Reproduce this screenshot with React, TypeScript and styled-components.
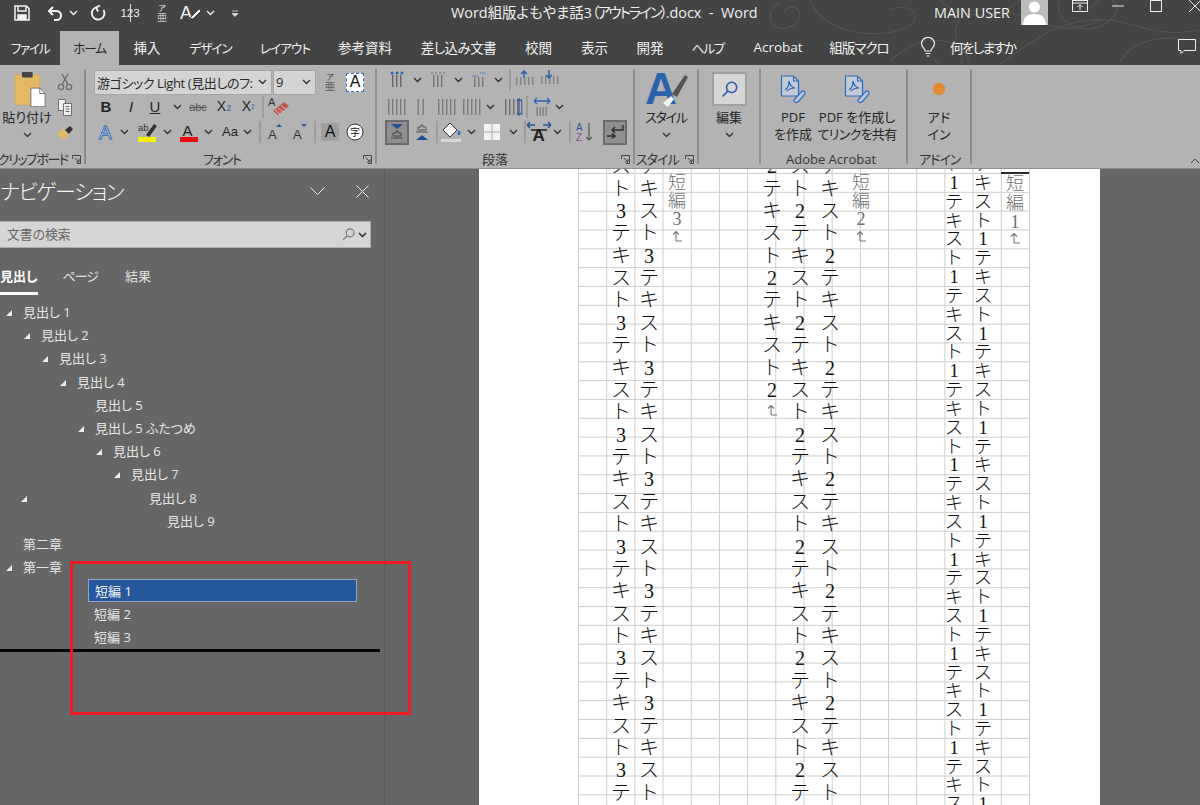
import React, { ReactNode } from "react";
import styled, { createGlobalStyle } from "styled-components";

const UI = `"Open Sans", "Noto Sans CJK JP", sans-serif`;

const Global = createGlobalStyle`
  html, body { margin: 0; padding: 0; background: #666; }
  body { font-family: ${UI}; overflow: hidden; }
  #root { width: 1200px; height: 805px; }
`;

const Win = styled.div`
  width: 1200px;
  height: 805px;
  display: flex;
  flex-direction: column;
  overflow: hidden;
  position: relative;
  font-feature-settings: "palt";
`;

/* the katakana of the reference's UI font is narrower than Noto's */
const Tight = styled.span<{ $ls: number }>`
  letter-spacing: ${(p) => p.$ls}px;
`;

/* title bar + tabs */
const Top = styled.div`
  background: #444;
  height: 65px;
  flex: none;
  position: relative;
`;
const Swirl = styled.svg`
  position: absolute;
  right: 0;
  top: 0;
`;
const TitleBar = styled.div`
  height: 31px;
  display: flex;
  align-items: center;
  position: relative;
  color: #efefef;
`;
const Qat = styled.div`
  width: 451px;
  flex: none;
  padding-bottom: 5px;
`;
const DocTitle = styled.div`
  font-size: 14.4px;
  line-height: 20px;
  width: 483px;
  flex: none;
  padding-bottom: 5px;
  white-space: pre;
`;
const UserName = styled.div`
  font-size: 14.4px;
  line-height: 20px;
  width: 87px;
  flex: none;
  padding-bottom: 5px;
  white-space: nowrap;
`;
const Avatar = styled.svg`
  flex: none;
  align-self: flex-start;
`;
const WinBtn = styled.div<{ $gap: number }>`
  flex: none;
  align-self: flex-start;
  margin-left: ${(p) => p.$gap}px;
  height: 14px;
  display: flex;
`;
const Tabs = styled.div`
  height: 34px;
  display: flex;
  align-items: stretch;
  position: relative;
  font-size: 13.5px;
  color: #f0f0f0;
`;
const Tab = styled.div<{ $on?: boolean; $w: number; $ls: number; $kana: boolean }>`
  width: ${(p) => p.$w}px;
  flex: none;
  display: flex;
  align-items: center;
  justify-content: center;
  padding-bottom: 2px;
  white-space: nowrap;
  letter-spacing: ${(p) => p.$ls}px;
  font-size: ${(p) => (p.$kana ? 12.6 : 13.5)}px;
  background: ${(p) => (p.$on ? "#b3b3b3" : "transparent")};
  color: ${(p) => (p.$on ? "#262626" : "#f0f0f0")};
`;
const TellMe = styled.div`
  display: flex;
  align-items: center;
  gap: 14px;
  margin-left: 19px;
  padding-bottom: 2px;
  white-space: nowrap;
  letter-spacing: -1.6px;
`;
const Comment = styled.svg`
  margin-left: auto;
  margin-right: 4px;
  align-self: center;
  margin-bottom: 2px;
`;

/* ribbon */
const Ribbon = styled.div`
  height: 104px;
  flex: none;
  background: #b3b3b3;
  border-bottom: 1px solid #8f8f8f;
  box-sizing: border-box;
  padding-top: 4px;
  display: flex;
  position: relative;
  color: #262626;
  font-size: 13px;
`;
const Group = styled.div<{ $w: number }>`
  width: ${(p) => p.$w}px;
  flex: none;
  display: flex;
  flex-direction: column;
`;
const GroupBody = styled.div`
  height: 81px;
  flex: none;
  display: flex;
`;
const Stack = styled.div`
  display: flex;
  flex-direction: column;
  flex: none;
  width: 100%;
`;
const GroupLabel = styled.div<{ $left: number; $ls?: number }>`
  height: 18px;
  display: flex;
  align-items: center;
  margin-left: ${(p) => p.$left}px;
  padding-right: 3px;
  font-size: 13px;
  letter-spacing: ${(p) => p.$ls ?? 0}px;
  color: #333;
  white-space: nowrap;
  line-height: 18px;
`;
const Launcher = styled.svg`
  margin-left: auto;
  flex: none;
`;
const Sep = styled.div`
  width: 2px;
  flex: none;
  background: #8d8d8d;
  height: 95px;
`;
const CollapseIcon = styled.svg`
  position: absolute;
  right: 0;
  bottom: 4px;
`;
const BigBtn = styled.div<{ $w: number }>`
  width: ${(p) => p.$w}px;
  flex: none;
  display: flex;
  flex-direction: column;
  align-items: center;
`;
const BigIcon = styled.div`
  height: 40px;
  flex: none;
  display: flex;
  align-items: center;
  justify-content: center;
`;
const BigText = styled.div<{ $ls?: number }>`
  line-height: 17px;
  height: 17px;
  white-space: nowrap;
  text-align: center;
  display: flex;
  justify-content: center;
  align-items: center;
  letter-spacing: ${(p) => p.$ls ?? 0}px;
`;
const SideTools = styled.div`
  width: 22px;
  flex: none;
  display: flex;
  flex-direction: column;
  align-items: center;
  gap: 7px;
  padding-top: 4px;
  & > svg:last-child {
    margin-top: 3px;
  }
`;
const EditBox = styled.div`
  width: 35px;
  height: 34px;
  box-sizing: border-box;
  background: #d6d6d6;
  border: 2px solid #a0a0a0;
  display: flex;
  align-items: center;
  justify-content: center;
`;
const Row = styled.div<{ $h: number }>`
  height: ${(p) => p.$h}px;
  flex: none;
  display: flex;
  align-items: center;
`;
const Slot = styled.div<{ $gap: number }>`
  width: 2px;
  flex: none;
  display: flex;
  justify-content: center;
  align-items: center;
  margin-left: ${(p) => p.$gap}px;
  & > * {
    flex: none;
  }
`;
const Combo = styled.div<{ $w: number; $ml: number }>`
  width: ${(p) => p.$w}px;
  margin-left: ${(p) => p.$ml}px;
  height: 25px;
  flex: none;
  box-sizing: border-box;
  background: #d4d4d4;
  border: 1px solid #a6a6a6;
  display: flex;
  align-items: center;
  padding: 0 4px 0 2px;
  font-size: 13px;
  letter-spacing: -0.4px;
  color: #2a2a2a;
  white-space: nowrap;
`;
const ComboText = styled.span`
  flex: 1;
  min-width: 0;
`;
const Letter = styled.span<{ $s?: number; $c?: string; $w?: number; $i?: boolean; $u?: boolean }>`
  font-size: ${(p) => p.$s ?? 14}px;
  color: ${(p) => p.$c ?? "#262626"};
  font-weight: ${(p) => p.$w ?? 400};
  font-style: ${(p) => (p.$i ? "italic" : "normal")};
  text-decoration: ${(p) => (p.$u ? "underline" : "none")};
  line-height: 18px;
  white-space: nowrap;
  font-family: "Liberation Sans", "Noto Sans CJK JP", sans-serif;
`;
const Active = styled.div`
  width: 24px;
  height: 25px;
  box-sizing: border-box;
  background: #8f8f8f;
  border: 2px solid #6c6c6c;
  display: flex;
  align-items: center;
  justify-content: center;
`;
const Dim = styled.div`
  width: 2px;
  height: 22px;
  background: #9c9c9c;
`;
const FuriIcon = styled.div<{ $c: string }>`
  width: 14px;
  display: flex;
  flex-direction: column;
  align-items: center;
  color: ${(p) => p.$c};
  line-height: 9px;
  font-size: 8px;
`;
const FuriBig = styled.span`
  font-size: 10.5px;
  line-height: 11px;
  opacity: 0.75;
`;
const BoxA = styled.div`
  width: 18px;
  height: 19px;
  box-sizing: border-box;
  background: #fff;
  border: 1px dashed #3b6db5;
  display: flex;
  align-items: center;
  justify-content: center;
`;
const GrayA = styled.div`
  width: 18px;
  height: 18px;
  background: #9f9f9f;
  display: flex;
  align-items: center;
  justify-content: center;
`;
const OneTwoThree = styled.span`
  position: relative;
  font-size: 11.5px;
  color: #eee;
  font-family: "Liberation Sans", sans-serif;
  &::after {
    content: "";
    position: absolute;
    left: 50%;
    top: -3px;
    bottom: -3px;
    width: 1px;
    background: #ddd;
  }
`;

/* main */
const Main = styled.div`
  flex: 1;
  min-height: 0;
  display: flex;
  position: relative;
  background: #666;
`;
const Nav = styled.div`
  width: 384px;
  flex: none;
  color: #e6e6e6;
  font-size: 13px;
`;
const NavHead = styled.div`
  height: 44px;
  display: flex;
  align-items: center;
`;
const NavTitle = styled.div`
  font-size: 21px;
  letter-spacing: -1.5px;
  width: 310px;
  flex: none;
  color: #f6f6f6;
  white-space: nowrap;
  font-weight: 300;
  padding-bottom: 2px;
`;
const NavClose = styled.svg`
  margin-left: 31px;
`;
const Search = styled.div`
  width: 371px;
  height: 27px;
  margin-top: 8px;
  box-sizing: border-box;
  background: #d5d5d5;
  border: 1px solid #ababab;
  border-left: none;
  display: flex;
  align-items: center;
  padding: 0 0 3px 7px;
  color: #666;
  font-size: 12.8px;
`;
const SearchIcons = styled.div`
  margin-left: auto;
  display: flex;
  align-items: center;
  gap: 3px;
  padding-right: 3px;
  padding-top: 3px;
`;
const NavTabs = styled.div`
  display: flex;
  margin-top: 15px;
  height: 32px;
  box-sizing: border-box;
`;
const NavTab = styled.div<{ $on?: boolean; $ml: number; $ls?: number }>`
  margin-left: ${(p) => p.$ml}px;
  height: 32px;
  box-sizing: border-box;
  border-bottom: 3px solid ${(p) => (p.$on ? "#fff" : "transparent")};
  padding-right: ${(p) => (p.$on ? 1 : 0)}px;
  padding-bottom: 4px;
  letter-spacing: ${(p) => p.$ls ?? 0}px;
  display: flex;
  align-items: center;
  font-weight: ${(p) => (p.$on ? 700 : 400)};
  color: ${(p) => (p.$on ? "#fff" : "#e2e2e2")};
`;
const Tree = styled.div`
  margin-top: 6px;
`;
const TreeRow = styled.div<{ $x: number }>`
  height: 23.2px;
  box-sizing: border-box;
  display: flex;
  align-items: center;
  padding-left: ${(p) => p.$x}px;
  padding-bottom: 2px;
  position: relative;
  white-space: pre;
`;
const Arrow = styled.svg<{ $x: number }>`
  position: absolute;
  left: ${(p) => p.$x}px;
  top: 8px;
`;
const SelRow = styled.div`
  height: 23.2px;
  display: flex;
  align-items: center;
  margin-left: 88px;
  width: 269px;
  box-sizing: border-box;
  padding: 0 0 1px 6px;
  background: #26569b;
  border: 1px solid #8da7ce;
  color: #f2f2f2;
  white-space: pre;
`;
const EndLine = styled.div`
  height: 3px;
  width: 380px;
  background: #050505;
`;
const Doc = styled.div`
  flex: 1;
  min-width: 0;
  border-left: 1px solid #5b5b5b;
  display: flex;
`;
const Page = styled.div`
  width: 621px;
  margin-left: 94px;
  background: #fff;
  flex: none;
  overflow: hidden;
`;
const Sheet = styled.div`
  width: 452px;
  height: 100%;
  box-sizing: border-box;
  margin-left: 99px;
  display: flex;
  overflow: hidden;
  background-image: linear-gradient(to right, #cdcdcd 1px, transparent 1px),
    linear-gradient(to bottom, #cdcdcd 1px, transparent 1px);
  background-size: 28.2px 18.84px;
  background-position: 0 4px;
`;
const TextCol = styled.div<{ $ml: number; $top: number }>`
  width: 28px;
  flex: none;
  margin-left: ${(p) => p.$ml}px;
  margin-top: ${(p) => p.$top}px;
  display: flex;
  flex-direction: column;
  align-items: center;
`;
const RuledCol = styled(TextCol)`
  box-sizing: border-box;
  border-top: 2px solid #2b2b2b;
`;
const Cell = styled.div<{ $h: number; $gray?: boolean }>`
  height: ${(p) => p.$h}px;
  flex: none;
  display: flex;
  align-items: center;
  justify-content: center;
  font-family: "Liberation Serif", "Noto Sans CJK JP", serif;
  font-feature-settings: normal;
  font-size: ${(p) => (p.$gray ? 18 : p.$h > 20 ? 20 : 18.5)}px;
  font-weight: 300;
  line-height: 1;
  color: ${(p) => (p.$gray ? "#6f6f6f" : "#111")};
`;
const RedBox = styled.div`
  position: absolute;
  left: 70px;
  top: 392px;
  width: 341px;
  height: 154px;
  box-sizing: border-box;
  border: 3px solid #ed1c24;
`;

/* icons */
const Caret = ({ c = "#333" }: { c?: string }) => (
  <svg width="9" height="6" viewBox="0 0 9 6"><path d="M1 1l3.5 3.5L8 1" fill="none" stroke={c} strokeWidth="1.4" /></svg>
);
const LauncherIcon = () => (
  <Launcher width="9" height="9" viewBox="0 0 9 9">
    <path d="M.5 4V.5h8v8H5M3 3l4 4M7 4v3H4" fill="none" stroke="#444" />
  </Launcher>
);
const Tri = ({ x }: { x: number }) => (
  <Arrow $x={x} width="8" height="8" viewBox="0 0 8 8"><path d="M7 1v6H1z" fill="#eee" /></Arrow>
);
const Bars = ({ n = 3, step = 4, top = 5, h = 12, c = "#666", w = 1.4, children }: { n?: number; step?: number; top?: number; h?: number; c?: string; w?: number; children?: ReactNode }) => {
  const width = (n - 1) * step + 4;
  const box = Math.max(width, 18);
  return (
    <svg width={box} height="20" viewBox={`0 0 ${box} 20`}>
      {Array.from({ length: n }, (_, i) => (
        <rect key={i} x={(box - width) / 2 + 1 + i * step} y={top} width={w} height={h} fill={c} />
      ))}
      {children}
    </svg>
  );
};
const Person = () => (
  <Avatar width="27" height="25" viewBox="0 0 27 25">
    <rect width="27" height="25" fill="#bdbdbd" />
    <circle cx="13.5" cy="7" r="5.5" fill="#fff" />
    <path d="M2 25c0-8 5-11 11.500-11S25 17 25 25z" fill="#fff" />
  </Avatar>
);
const PasteSvg = styled.svg`
  margin-left: 5px;
`;
const PasteIcon = () => (
  <PasteSvg width="32" height="36" viewBox="0 0 36 40">
    <rect x="1" y="4" width="28" height="34" rx="1" fill="#e4b966" stroke="#c9a253" strokeDasharray="2 1" />
    <rect x="9" y="1" width="12" height="6" rx="1" fill="#444" />
    <path d="M19 19h10l6 6v15H19z" fill="#fff" stroke="#666" />
    <path d="M29 19v6h6" fill="none" stroke="#666" />
  </PasteSvg>
);
const Scissors = () => (
  <svg width="16" height="18" viewBox="0 0 16 18" fill="none" stroke="#6e6e6e" strokeWidth="1.4">
    <circle cx="4" cy="14" r="2.6" /><circle cx="12" cy="14" r="2.6" /><path d="M5 11.500L11 1M11 11.500L5 1" />
  </svg>
);
const Copy = () => (
  <svg width="16" height="18" viewBox="0 0 16 18" fill="#eee" stroke="#6e6e6e">
    <path d="M1.500 1.500h7v11h-7z" /><path d="M6.500 5.500h8v12h-8z" /><path d="M8.500 8.500h4M8.500 11h4M8.500 13.500h4" fill="none" />
  </svg>
);
const Painter = () => (
  <svg width="16" height="14" viewBox="0 0 16 14">
    <path d="M0 8l6-5 6 6-5 5z" fill="#e4b966" /><path d="M8 4l5-4 3 3-4 5z" fill="#333" />
  </svg>
);
const ClearFmt = () => (
  <svg width="24" height="24" viewBox="0 0 24 24">
    <text x="1" y="11" fontSize="11" fontFamily="Liberation Sans" fill="#333">A</text>
    <path d="M6 16l11-9 5 4-11 9z" fill="#c0392b" opacity=".75" />
    <path d="M8 15l5 4M11 13l5 4M14 10.500l5 4" stroke="#e8b0a8" />
  </svg>
);
const BlueA = () => (
  <svg width="18" height="20" viewBox="0 0 18 20">
    <text x="1" y="17" fontSize="19" fontFamily="Liberation Sans" fill="#e8eef8" stroke="#2f67b2" strokeWidth=".9">A</text>
  </svg>
);
const HighlightIcon = () => (
  <svg width="20" height="22" viewBox="0 0 20 22">
    <text x="1" y="10" fontSize="9.500" fontFamily="Liberation Sans" fill="#333">ab</text>
    <path d="M9 14l8-11 3 2-8 11z" fill="#333" />
    <rect x="1" y="16" width="18" height="5" fill="#f5f000" />
  </svg>
);
const ColorA = () => (
  <svg width="20" height="22" viewBox="0 0 20 22">
    <text x="3.500" y="15" fontSize="15" fontFamily="Liberation Sans" fill="#222">A</text>
    <rect x="1" y="16" width="18" height="5" fill="#ea0a0f" />
  </svg>
);
const GrowA = ({ up }: { up?: boolean }) => (
  <svg width="18" height="18" viewBox="0 0 18 18">
    <text x="2" y="16" fontSize="13" fontFamily="Liberation Sans" fill="#333">A</text>
    <path d={up ? "M10 4l3-3 3 3z" : "M10 1h6l-3 3z"} fill="#2b579a" />
  </svg>
);
const Ruby = () => (
  <svg width="18" height="18" viewBox="0 0 18 18">
    <circle cx="9" cy="9" r="8" fill="#fff" stroke="#333" />
    <text x="4" y="13" fontSize="10" fontFamily="Noto Sans CJK JP" fill="#222">字</text>
  </svg>
);
const ActiveDown = () => (
  <svg width="18" height="18" viewBox="0 0 18 18">
    <path d="M3 1h12l-6 5z" fill="#1f4f96" /><path d="M5 13h8v-3h-3V8H8v2H5zM3 15h12" fill="none" stroke="#444" />
  </svg>
);
const UpTri = () => (
  <svg width="18" height="20" viewBox="0 0 18 20">
    <path d="M5 8h8V5h-3V3H8v2H5zM3 10h12" fill="none" stroke="#555" /><path d="M3 18h12l-6-5z" fill="#1f4f96" />
  </svg>
);
const Bucket = () => (
  <svg width="24" height="22" viewBox="0 0 24 22">
    <path d="M3 9l7-7 7 7-7 7z" fill="#fff" stroke="#333" /><path d="M19 9c2 3 2 5 0 5s-2-2 0-5z" fill="#2b6cb8" />
    <rect x="1" y="18" width="20" height="3" fill="#d9d9d9" />
  </svg>
);
const Borders = () => (
  <svg width="16" height="16" viewBox="0 0 16 16">
    <rect width="16" height="16" fill="#f2f2f2" /><path d="M8 0v16M0 8h16" stroke="#aaa" />
  </svg>
);
const Spacing = () => (
  <svg width="26" height="24" viewBox="0 0 26 24">
    <text x="6.500" y="21" fontSize="17" fontFamily="Liberation Sans" fontWeight="700" fill="#222">A</text>
    <path d="M1 5h8M1 5l3-3M1 5l3 3M25 5h-8M25 5l-3-3M25 5l-3 3" fill="none" stroke="#2b579a" strokeWidth="1.500" />
    <path d="M5 10h16" stroke="#222" strokeWidth="1.500" />
  </svg>
);
const SortIcon = () => (
  <svg width="20" height="22" viewBox="0 0 20 22">
    <text x="1" y="10" fontSize="10" fontFamily="Liberation Sans" fill="#2b579a">A</text>
    <text x="1" y="20" fontSize="10" fontFamily="Liberation Sans" fill="#8a4a8a">Z</text>
    <path d="M14 2v17M11 16l3 3 3-3" fill="none" stroke="#555" strokeWidth="1.200" />
  </svg>
);
const ReturnIcon = () => (
  <svg width="20" height="18" viewBox="0 0 20 18" fill="none" stroke="#2e2e2e" strokeWidth="1.400">
    <path d="M18 2v5H7M10 4L7 7l3 3" /><path d="M2 13h8M7 10.500l3 2.500-3 2.500" />
  </svg>
);
const StyleIcon = () => (
  <svg width="50" height="46" viewBox="0 0 50 46">
    <text x="4" y="38" fontSize="44" fontFamily="Liberation Sans" fontWeight="700" fill="#2b62ad">A</text>
    <path d="M22 37l8-7 3 3-6 8z" fill="#f2f2f2" />
    <path d="M31 28L44 9l3 2-11 20z" fill="#555" />
  </svg>
);
const Magnifier = ({ c, s }: { c: string; s: number }) => (
  <svg width={s} height={s} viewBox="0 0 16 16" fill="none" stroke={c} strokeWidth="1.500">
    <circle cx="10" cy="6" r="4.800" /><path d="M6.500 9.500L1.500 14.500" />
  </svg>
);
const PdfIcon = () => (
  <svg width="26" height="28" viewBox="0 0 26 28" fill="none" stroke="#2b6cc0" strokeWidth="1.200">
    <path d="M1.500 1h12l5 5v15h-17z" fill="#c2cad6" /><path d="M13.500 1v5h5" />
    <path d="M5 15c3-2 4-5 4-9 1 4 2 6 6 7-4 0-6 1-8 3" />
    <path d="M14 25l8-9a2.500 2.500 0 0 1 3 3l-7 8a2.500 2.500 0 0 1-4-2z" fill="#bcc6d4" />
  </svg>
);
const SaveIcon = () => (
  <svg width="16" height="16" viewBox="0 0 16 16" fill="none" stroke="#f2f2f2" strokeWidth="1.500">
    <path d="M1 1h11.500L15 3.500V15H1z" /><path d="M4 1v5h8V1" /><path d="M4 15v-5h8v5" fill="#f2f2f2" />
  </svg>
);
const UndoIcon = () => (
  <svg width="16" height="15" viewBox="0 0 16 15" fill="none" stroke="#f2f2f2" strokeWidth="2">
    <path d="M2 5h7.500a4 4 0 0 1 0 9H7" /><path d="M6 1L2 5l4 4" />
  </svg>
);
const RepeatIcon = () => (
  <svg width="16" height="16" viewBox="0 0 16 16" fill="none" stroke="#f2f2f2" strokeWidth="1.900">
    <path d="M5.500 2.500A6.300 6.300 0 1 0 13.500 5" /><path d="M10 .5L6 2.500 8 6.500" />
  </svg>
);
const BrushA = () => (
  <svg width="24" height="20" viewBox="0 0 24 20">
    <text x="0" y="16" fontSize="18" fontFamily="Liberation Sans" fill="#f2f2f2">A</text>
    <path d="M10 15l9-9 2 2-8 8z" fill="#f2f2f2" stroke="#444" />
  </svg>
);
const QatDrop = () => (
  <svg width="8" height="7" viewBox="0 0 8 7"><path d="M1 1h6M1 3.500h6L4 6.500z" fill="#ddd" stroke="#ddd" strokeWidth=".8" /></svg>
);
const ArrowBack = ({ c = "#777" }: { c?: string }) => (
  <svg width="12" height="12" viewBox="0 0 12 12" fill="none" stroke={c} strokeWidth="1.100">
    <path d="M5 11V1.500M2 4.500l3-3 3 3M5 11h6" />
  </svg>
);
const Bulb = () => (
  <svg width="16" height="20" viewBox="0 0 16 20" fill="none" stroke="#f0f0f0" strokeWidth="1.200">
    <path d="M5 14c0-3-3.500-4-3.500-7.500a6.500 6 0 0 1 13 0C14.500 10 11 11 11 14z" /><path d="M5.500 16.500h5M6.500 19h3" />
  </svg>
);

const placeRow = (start: number, items: [number, ReactNode][]) => {
  let prev = start;
  return items.map(([c, node], i) => {
    const gap = c - prev - 1;
    prev = c + 1;
    return <Slot key={i} $gap={gap}>{node}</Slot>;
  });
};

const cycle = (s: string, from: number, n: number) =>
  Array.from({ length: n }, (_, i) => s[(from + i) % s.length]);

const tabs: { label: string; w: number; ls: number; kana?: boolean }[] = [
  { label: "ファイル", w: 60, ls: -1.2, kana: true },
  { label: "ホーム", w: 59, ls: -1.2, kana: true },
  { label: "挿入", w: 56, ls: 0 },
  { label: "デザイン", w: 71, ls: -1, kana: true },
  { label: "レイアウト", w: 78, ls: -0.9, kana: true },
  { label: "参考資料", w: 82, ls: 0 },
  { label: "差し込み文書", w: 105, ls: -0.5 },
  { label: "校閲", w: 55, ls: 0 },
  { label: "表示", w: 57, ls: 0 },
  { label: "開発", w: 54, ls: 0 },
  { label: "ヘルプ", w: 62, ls: -1.2, kana: true },
  { label: "Acrobat", w: 78, ls: 0 },
  { label: "組版マクロ", w: 84, ls: -1 },
];

const heads: [string, number, number?][] = [
  ["見出し 1", 23, 5],
  ["見出し 2", 41, 23],
  ["見出し 3", 59, 41],
  ["見出し 4", 77, 59],
  ["見出し 5", 95],
  ["見出し 5 ふたつめ", 95, 77],
  ["見出し 6", 113, 95],
  ["見出し 7", 131, 113],
  ["見出し 8", 149, 20],
  ["見出し 9", 167],
  ["第二章", 23],
  ["第一章", 23, 5],
];

const Body = ({ ml, top, chars, h, tail }: { ml: number; top: number; chars: string[]; h: number; tail?: boolean }) => (
  <TextCol $ml={ml} $top={top}>
    {chars.map((c, i) => <Cell key={i} $h={h}>{c}</Cell>)}
    {tail && <Cell $h={h - 4} $gray><ArrowBack /></Cell>}
  </TextCol>
);
const Heading = ({ ml, label }: { ml: number; label: string }) => (
  <TextCol $ml={ml} $top={5}>
    {["短", "編", label].map((c) => <Cell key={c} $h={18} $gray>{c}</Cell>)}
    <Cell $h={16} $gray><ArrowBack /></Cell>
  </TextCol>
);

export default function App() {
  return (
    <Win>
      <Global />
      <Top>
        <Swirl width="560" height="64" viewBox="0 0 560 64" fill="none" stroke="#545454" strokeWidth="1.100">
          <path d="M140 2c-20 12-6 34 12 24s2-28-8-14M170 0c10 30 60 40 90 30s10-30-10-20M330 60c-30-30-10-58 30-50s60 30 100 10M250 62c20-24 60-30 70-10s-20 20-26 6" />
          <path d="M360 64c30-20 50-40 90-44s60 20 110 10M420 0c-10 24 30 40 50 20s-10-30-20-10M480 62c10-20 40-30 80-20M300 0c20 20 60 20 80 0" />
        </Swirl>
        <TitleBar>
          <Qat>
            <Row $h={26}>
              {placeRow(0, [
                [22, <SaveIcon />],
                [55, <UndoIcon />],
                [73, <Caret c="#eee" />],
                [98, <RepeatIcon />],
                [130, <OneTwoThree>123</OneTwoThree>],
                [162, <FuriIcon $c="#e8e8e8">ア<FuriBig>亜</FuriBig></FuriIcon>],
                [192, <BrushA />],
                [210, <Caret c="#eee" />],
                [235, <QatDrop />],
              ])}
            </Row>
          </Qat>
          <DocTitle>Word組版よもやま話3<Tight $ls={-2}>（アウトライン）</Tight>.docx  -  Word</DocTitle>
          <UserName>MAIN USER</UserName>
          <Person />
          <WinBtn $gap={24}>
            <svg width="16" height="12" viewBox="0 0 16 12" fill="none" stroke="#eee"><rect x=".5" y=".5" width="15" height="11" /><path d="M1 3h14M8 10V5M5.500 7L8 4.500 10.500 7" /></svg>
          </WinBtn>
          <WinBtn $gap={24}>
            <svg width="12" height="12" viewBox="0 0 12 12"><path d="M0 6h12" stroke="#eee" /></svg>
          </WinBtn>
          <WinBtn $gap={26}>
            <svg width="12" height="12" viewBox="0 0 12 12" fill="none" stroke="#eee"><rect x=".5" y=".5" width="11" height="11" /></svg>
          </WinBtn>
          <WinBtn $gap={27}>
            <svg width="12" height="12" viewBox="0 0 12 12" fill="none" stroke="#eee"><path d="M0 0l12 12M12 0L0 12" /></svg>
          </WinBtn>
        </TitleBar>
        <Tabs>
          {tabs.map((t) => (
            <Tab key={t.label} $on={t.label === "ホーム"} $w={t.w} $ls={t.ls} $kana={!!t.kana}>{t.label}</Tab>
          ))}
          <TellMe><Bulb />何をしますか</TellMe>
          <Comment width="18" height="16" viewBox="0 0 18 16" fill="none" stroke="#eee"><path d="M.5.500h17v11H6l-3 3v-3H.5z" /></Comment>
        </Tabs>
      </Top>

      <Ribbon>
        <Group $w={84}>
          <GroupBody>
            <BigBtn $w={54}>
              <BigIcon><PasteIcon /></BigIcon>
              <BigText>貼り付け</BigText>
              <BigText><Caret /></BigText>
            </BigBtn>
            <SideTools><Scissors /><Copy /><Painter /></SideTools>
          </GroupBody>
          <GroupLabel $left={-2} $ls={-1.5}>クリップボード<LauncherIcon /></GroupLabel>
        </Group>
        <Sep />
        <Group $w={289}>
          <GroupBody>
            <Stack>
              <Row $h={26}>
                <Combo $w={178} $ml={8}><ComboText>游ゴシック Light (見出しのフ:</ComboText><Caret /></Combo>
                <Combo $w={43} $ml={1}><ComboText>9</ComboText><Caret /></Combo>
                <Slot $gap={13}><FuriIcon $c="#444">ア<FuriBig>亜</FuriBig></FuriIcon></Slot>
                <Slot $gap={23}><BoxA><Letter $s={16} $c="#111">A</Letter></BoxA></Slot>
              </Row>
              <Row $h={24}>
                {placeRow(86, [
                  [106, <Letter $s={15} $w={700}>B</Letter>],
                  [131, <Letter $s={15} $i>I</Letter>],
                  [155, <Letter $s={15} $u>U</Letter>],
                  [177, <Caret />],
                  [198, <Letter $s={11} $c="#555"><s>abc</s></Letter>],
                  [224, <Letter $s={14}>X<Letter $s={9} $c="#2b62ad">2</Letter></Letter>],
                  [248, <Letter $s={14}>X<Letter $s={9} $c="#2b62ad">²</Letter></Letter>],
                  [263, <Dim />],
                  [279, <ClearFmt />],
                ])}
              </Row>
              <Row $h={26}>
                {placeRow(86, [
                  [107, <BlueA />],
                  [124, <Caret />],
                  [147, <HighlightIcon />],
                  [167, <Caret />],
                  [189, <ColorA />],
                  [208, <Caret />],
                  [230, <Letter $s={13}>Aa</Letter>],
                  [247, <Caret />],
                  [260, <Dim />],
                  [275, <GrowA up />],
                  [300, <GrowA />],
                  [315, <Dim />],
                  [330, <GrayA><Letter $s={16} $c="#111">A</Letter></GrayA>],
                  [355, <Ruby />],
                ])}
              </Row>
            </Stack>
          </GroupBody>
          <GroupLabel $left={117} $ls={-1.2}>フォント<LauncherIcon /></GroupLabel>
        </Group>
        <Sep />
        <Group $w={256}>
          <GroupBody>
            <Stack>
              <Row $h={22}>
                {placeRow(377, [
                  [397, <Bars><circle cx="4" cy="3" r="1.500" fill="#2b62ad" /><circle cx="9" cy="3" r="1.500" fill="#2b62ad" /><circle cx="14" cy="3" r="1.500" fill="#2b62ad" /></Bars>],
                  [417, <Caret />],
                  [438, <Bars c="#777"><path d="M2 3h14" stroke="#777" strokeDasharray="2 2" /></Bars>],
                  [458, <Caret />],
                  [479, <Bars c="#777" top={7} h={10}><path d="M2 6h6M10 3h6" stroke="#5c82b8" /></Bars>],
                  [498, <Caret />],
                  [510, <Dim />],
                  [525, <Bars n={5} top={7} h={8} c="#808080"><path d="M9 1v7M6 4l3-3 3 3" fill="none" stroke="#2b62ad" strokeWidth="1.500" /></Bars>],
                  [550, <Bars n={5} top={6} h={8} c="#808080"><path d="M9 0v7M6 5l3 3 3-3" fill="none" stroke="#2b62ad" strokeWidth="1.500" /></Bars>],
                ])}
              </Row>
              <Row $h={32}>
                {placeRow(377, [
                  [397, <Bars n={5} top={2} h={16} c="#7a7a7a" />],
                  [421, <Bars n={2} step={5} top={2} h={16} c="#7a7a7a" />],
                  [447, <Bars n={5} top={2} h={16} c="#7a7a7a" />],
                  [472, <Bars n={5} top={2} h={16} c="#7a7a7a" />],
                  [490, <Caret />],
                  [514, <Bars n={5} top={2} h={16} c="#6f6f6f"><path d="M15 2v16M13 4l2-2 2 2M13 16l2 2 2-2" fill="none" stroke="#2b62ad" strokeWidth="1.300" /></Bars>],
                  [527, <Dim />],
                  [542, <Bars n={4} step={3} top={10} h={9} c="#808080"><path d="M1 4h16M1 4l3-3M1 4l3 3M17 4l-3-3M17 4l-3 3M6 4h6" fill="none" stroke="#2b62ad" strokeWidth="1.300" /></Bars>],
                  [559, <Caret />],
                ])}
              </Row>
              <Row $h={18}>
                {placeRow(377, [
                  [397, <Active><ActiveDown /></Active>],
                  [422, <UpTri />],
                  [437, <Dim />],
                  [452, <Bucket />],
                  [471, <Caret />],
                  [492, <Borders />],
                  [513, <Caret />],
                  [525, <Dim />],
                  [539, <Spacing />],
                  [557, <Caret />],
                  [570, <Dim />],
                  [585, <SortIcon />],
                  [615, <Active><ReturnIcon /></Active>],
                ])}
              </Row>
            </Stack>
          </GroupBody>
          <GroupLabel $left={105}>段落<LauncherIcon /></GroupLabel>
        </Group>
        <Sep />
        <Group $w={62}>
          <GroupBody>
            <BigBtn $w={62}>
              <BigIcon><StyleIcon /></BigIcon>
              <BigText $ls={-1.2}>スタイル</BigText>
              <BigText><Caret /></BigText>
            </BigBtn>
          </GroupBody>
          <GroupLabel $left={1} $ls={-1}>スタイル<LauncherIcon /></GroupLabel>
        </Group>
        <Sep />
        <Group $w={60}>
          <GroupBody>
            <BigBtn $w={60}>
              <BigIcon><EditBox><Magnifier c="#2b62ad" s={17} /></EditBox></BigIcon>
              <BigText>編集</BigText>
              <BigText><Caret /></BigText>
            </BigBtn>
          </GroupBody>
          <GroupLabel $left={0} />
        </Group>
        <Sep />
        <Group $w={145}>
          <GroupBody>
            <BigBtn $w={64}>
              <BigIcon><PdfIcon /></BigIcon>
              <BigText>PDF</BigText>
              <BigText>を作成</BigText>
            </BigBtn>
            <BigBtn $w={64}>
              <BigIcon><PdfIcon /></BigIcon>
              <BigText>PDF を作成し</BigText>
              <BigText $ls={-0.7}>てリンクを共有</BigText>
            </BigBtn>
          </GroupBody>
          <GroupLabel $left={25}>Adobe Acrobat</GroupLabel>
        </Group>
        <Sep />
        <Group $w={62}>
          <GroupBody>
            <BigBtn $w={62}>
              <BigIcon>
                <svg width="14" height="14" viewBox="0 0 14 14"><circle cx="7" cy="7" r="6.200" fill="#e08a34" /></svg>
              </BigIcon>
              <BigText>アド</BigText>
              <BigText>イン</BigText>
            </BigBtn>
          </GroupBody>
          <GroupLabel $left={11} $ls={-1}>アドイン</GroupLabel>
        </Group>
        <Sep />
        <CollapseIcon width="10" height="6" viewBox="0 0 10 6"><path d="M1 5l4-4 4 4" fill="none" stroke="#444" /></CollapseIcon>
      </Ribbon>

      <Main>
        <Nav>
          <NavHead>
            <NavTitle>ナビゲーション</NavTitle>
            <svg width="15" height="9" viewBox="0 0 15 9" fill="none" stroke="#eee"><path d="M.5.500l7 7 7-7" /></svg>
            <NavClose width="13" height="13" viewBox="0 0 13 13" fill="none" stroke="#eee"><path d="M.5.500l12 12M12.500.500l-12 12" /></NavClose>
          </NavHead>
          <Search>
            文書の検索
            <SearchIcons><Magnifier c="#777" s={13} /><Caret c="#222" /></SearchIcons>
          </Search>
          <NavTabs>
            <NavTab $on $ml={0}>見出し</NavTab>
            <NavTab $ml={24} $ls={-1}>ページ</NavTab>
            <NavTab $ml={27}>結果</NavTab>
          </NavTabs>
          <Tree>
            {heads.map(([t, x, tri]) => (
              <TreeRow key={t} $x={x}>{tri !== undefined && <Tri x={tri} />}{t}</TreeRow>
            ))}
            <SelRow>短編 1</SelRow>
            <TreeRow $x={94}>短編 2</TreeRow>
            <TreeRow $x={94}>短編 3</TreeRow>
            <EndLine />
          </Tree>
        </Nav>
        <Doc>
          <Page>
            <Sheet>
              <Body ml={29} top={-14} chars={cycle("テキスト3", 2, 29)} h={22.38} />
              <Body ml={0} top={-14} chars={cycle("テキスト3", 0, 29)} h={22.38} />
              <Heading ml={0} label="3" />
              <Body ml={67} top={-14} chars={cycle("テキスト2", 4, 11)} h={22.38} tail />
              <Body ml={0} top={-14} chars={cycle("テキスト2", 2, 29)} h={22.38} />
              <Body ml={2} top={-14} chars={cycle("テキスト2", 0, 29)} h={22.38} />
              <Heading ml={3} label="2" />
              <Body ml={65} top={-14} chars={cycle("テキスト1", 3, 35)} h={18.84} />
              <Body ml={1} top={-14} chars={cycle("テキスト1", 0, 35)} h={18.84} />
              <RuledCol $ml={4} $top={3}>
                {["短", "編", "1"].map((c) => <Cell key={c} $h={19} $gray>{c}</Cell>)}
                <Cell $h={14} $gray><ArrowBack /></Cell>
              </RuledCol>
            </Sheet>
          </Page>
        </Doc>
        <RedBox />
      </Main>
    </Win>
  );
}
